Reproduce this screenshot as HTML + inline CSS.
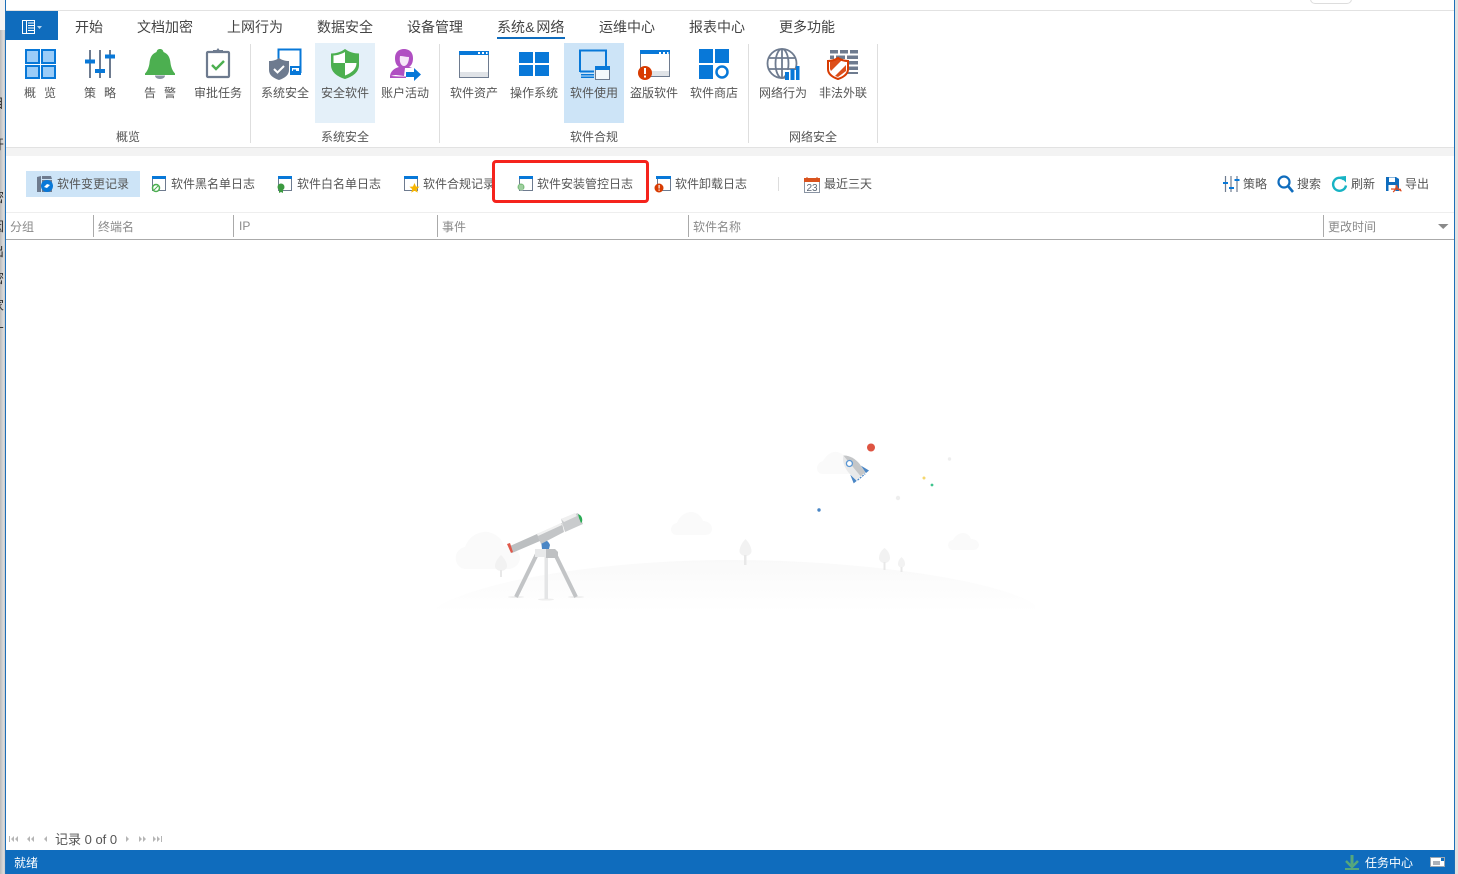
<!DOCTYPE html>
<html lang="zh"><head><meta charset="utf-8"><title>软件安装管控日志</title>
<style>
html,body{margin:0;padding:0;background:#fff}
body{width:1458px;height:874px;overflow:hidden;position:relative;font-family:"Liberation Sans","Noto Sans CJK SC",sans-serif;color:#555;font-size:12px}
.a{position:absolute}
.t{position:absolute;line-height:18px;height:18px;white-space:nowrap}
.tab{font-size:14px;top:18px;color:#444}
.r{top:84px;width:80px;text-align:center;color:#555}
.g{top:128px;width:100px;text-align:center;color:#555}
.b{top:175px;color:#555}
.h{top:218px;color:#8a8a8a}
.s{position:absolute;width:1px;background:#dedede;top:44px;height:99px}
.c{position:absolute;width:1px;background:#aaa;top:215px;height:22px}
svg{position:absolute;overflow:visible}
</style></head><body>

<!-- window edges -->
<div class="a" style="left:0;top:0;width:5px;height:874px;background:linear-gradient(90deg,#b9b9b9,#dcdcdc 70%,#c9c9c9)"></div>
<div class="a" style="left:0;top:0;width:5px;height:30px;background:#f4f4f4"></div>
<div class="a" style="left:5px;top:0;width:1px;height:874px;background:#1d6fb8"></div>
<div class="a" style="left:1454px;top:0;width:1px;height:874px;background:#1d6fb8"></div>
<div class="a" style="left:1455px;top:0;width:3px;height:874px;background:#e2e2e2"></div>
<div style="position:absolute;left:0;top:0;width:5px;height:874px;overflow:hidden;color:#333;font-size:13px">
<div class="t" style="left:-9px;top:95px">目</div>
<div class="t" style="left:-9px;top:136px">开</div>
<div class="t" style="left:-9px;top:189px">密</div>
<div class="t" style="left:-9px;top:218px">因</div>
<div class="t" style="left:-9px;top:243px">出</div>
<div class="t" style="left:-9px;top:270px">密</div>
<div class="t" style="left:-9px;top:297px">家</div>
<div class="t" style="left:-9px;top:324px">丁</div>
</div>

<!-- top -->
<div class="a" style="left:6px;top:10px;width:1448px;height:1px;background:#e2e2e2"></div>
<div class="a" style="left:1310px;top:-8px;width:40px;height:10px;border:1px solid #ddd;border-radius:5px"></div>

<!-- menu button -->
<div class="a" style="left:6px;top:11px;width:52px;height:29px;background:#0f6cbd"></div>
<svg style="left:0;top:0" width="60" height="40" fill="none">
<rect x="22.500" y="20.500" width="12" height="13" stroke="#fff"/><path d="M26.500 20v13M28 23h6M28 25.500h6M28 28h6M28 30.500h6" stroke="#fff"/>
<path d="M37 26h5l-2.500 3z" fill="#b9d6ee"/></svg>

<!-- tabs -->
<div class="t tab" style="left:75px">开始</div>
<div class="t tab" style="left:137px">文档加密</div>
<div class="t tab" style="left:227px">上网行为</div>
<div class="t tab" style="left:317px">数据安全</div>
<div class="t tab" style="left:407px">设备管理</div>
<div class="t tab" style="left:497px">系统<span style="letter-spacing:1.700px;margin-left:.3px">&amp;</span>网络</div>
<div class="a" style="left:497px;top:37px;width:68px;height:2px;background:#0f6cbd"></div>
<div class="t tab" style="left:599px">运维中心</div>
<div class="t tab" style="left:689px">报表中心</div>
<div class="t tab" style="left:779px">更多功能</div>

<!-- ribbon highlights -->
<div class="a" style="left:315px;top:43px;width:60px;height:80px;background:#e4f0f9"></div>
<div class="a" style="left:564px;top:43px;width:60px;height:80px;background:#cde4f7"></div>

<!-- ribbon separators -->
<div class="s" style="left:250px"></div><div class="s" style="left:439px"></div>
<div class="s" style="left:748px"></div><div class="s" style="left:877px"></div>

<!-- ribbon labels -->
<div class="t" style="left:24px;top:84px;letter-spacing:8px">概览</div>
<div class="t" style="left:84px;top:84px;letter-spacing:8px">策略</div>
<div class="t" style="left:144px;top:84px;letter-spacing:8px">告警</div>
<div class="t r" style="left:178px">审批任务</div>
<div class="t r" style="left:245px">系统安全</div>
<div class="t r" style="left:305px">安全软件</div>
<div class="t r" style="left:365px">账户活动</div>
<div class="t r" style="left:434px">软件资产</div>
<div class="t r" style="left:494px">操作系统</div>
<div class="t r" style="left:554px">软件使用</div>
<div class="t r" style="left:614px">盗版软件</div>
<div class="t r" style="left:674px">软件商店</div>
<div class="t r" style="left:743px">网络行为</div>
<div class="t r" style="left:803px">非法外联</div>
<div class="t g" style="left:78px">概览</div>
<div class="t g" style="left:295px">系统安全</div>
<div class="t g" style="left:544px">软件合规</div>
<div class="t g" style="left:763px">网络安全</div>

<!-- ribbon icons -->
<svg style="left:0;top:0" width="900" height="90" fill="none">
<!-- overview -->
<g fill="#9accf8" stroke="#0878d8" stroke-width="2"><rect x="26" y="50" width="13" height="13"/><rect x="42" y="50" width="13" height="13"/><rect x="26" y="66" width="13" height="12"/><rect x="42" y="66" width="13" height="12"/></g>
<!-- strategy -->
<path d="M90 50v28M100 50v28M110 50v28" stroke="#6e7b8f" stroke-width="2"/>
<path d="M85 59.500h10v4H85zM95 69h10v4H95zM105 54.500h10v4h-10z" fill="#0878d8"/>
<!-- bell -->
<path d="M160 49c2 0 3 1 3.500 3 5 2 6.500 6 7 11 .5 4 2 8 4.500 10.500v1.500h-30v-1.500c2.500-2.500 4-6.500 4.500-10.500.5-5 2-9 7-11 .5-2 1.500-3 3.500-3z" fill="#4caf50"/>
<path d="M155 75.500h10c0 2-2 3.500-5 3.500s-5-1.500-5-3.500z" fill="#8a94a3"/>
<!-- clipboard -->
<rect x="207" y="52" width="22" height="25" rx="1" stroke="#6e7b8f" stroke-width="2.200"/>
<path d="M213 52v-2h3.500l1.500-2 1.500 2h3.500v3h-10z" fill="#6e7b8f"/>
<path d="M212 65l4 4 8-8" stroke="#4caf50" stroke-width="2.400"/>
<!-- system security -->
<path d="M278.500 63V49.500h22V72h-9" stroke="#0878d8" stroke-width="2"/>
<path d="M291 67h9v7h-9z" fill="none" stroke="#0878d8" stroke-width="2"/><rect x="293" y="69.500" width="3" height="3" fill="#0878d8"/>
<path d="M279 58c3 2 6 3 10 3v9c0 5-4 8-10 10-6-2-10-5-10-10v-9c4 0 7-1 10-3z" fill="#6e7b8f"/>
<path d="M274 69l3.500 3.500 6.500-6.500" stroke="#fff" stroke-width="2"/>
<!-- safe software shield -->
<path d="M345 49c4 3 9 4.500 14 4.500V65c0 7-6 11.500-14 14-8-2.500-14-7-14-14V53.500c5 0 10-1.500 14-4.500z" fill="#4caf50"/>
<path d="M345 52v11h-11.500V55.500c4.500-.2 8-1.500 11.500-3.500zM345 63h11.500c0 6-5 10-11.500 12.500z" fill="#fff"/>
<!-- account -->
<path d="M396 75c-1 0-6 .5-6 2 0-6 5-9 9-10-3-2-4-5-4-9 0-6 4-9 9-9s9 3 9 9c0 4-1 7-4 9 1 0 2 .5 3 1h-7l-1 8z" fill="#b04fc2"/>
<path d="M400 56c3 0 6 1 9 1 0 5-2 9-5 9s-5-4-4-10z" fill="#f6e6f8"/>
<path d="M406 72h8v-4l7 6.500-7 6.500v-4h-8z" fill="#0878d8"/>
<path d="M390 75.500c3 1 10 1 16 1v1.500h-16z" fill="#b04fc2"/>
<!-- software assets -->
<rect x="459.500" y="51.500" width="29" height="26" stroke="#6e7b8f" fill="#fff"/><rect x="460" y="72" width="28" height="5" fill="#e0e3e7"/>
<rect x="459" y="51" width="30" height="4" fill="#0878d8"/><path d="M478 52h2v2h-2zM482 52h2v2h-2zM486 52h1.500v2H486z" fill="#fff"/>
<!-- windows -->
<path d="M519 52h14v11h-14zM535 52h14v11h-14zM519 65h14v11h-14zM535 65h14v11h-14z" fill="#0878d8"/>
<!-- software usage -->
<path d="M580 72V50.500h26V66" stroke="#0878d8" stroke-width="2"/>
<path d="M580 71.500h14" stroke="#0878d8" stroke-width="2"/>
<path d="M581 74h13v1.500h-13zM581 76.500h13v1.500h-13z" fill="#0878d8"/>
<rect x="595.500" y="67.500" width="14" height="12" fill="#f4f8fb" stroke="#6e7b8f"/><rect x="595" y="66" width="15" height="4" fill="#0878d8"/>
<!-- pirated -->
<rect x="640.500" y="51.500" width="29" height="25" stroke="#6e7b8f" fill="#fff"/><rect x="641" y="71" width="28" height="5" fill="#e0e3e7"/>
<rect x="640" y="50" width="30" height="4" fill="#0878d8"/><path d="M659 52h2v2h-2zM663 52h2v2h-2zM667 52h1.500v2H667z" fill="#fff"/>
<circle cx="645" cy="73" r="7" fill="#d83b01"/><path d="M644 68h2v6h-2zM644 75.500h2v2h-2z" fill="#fff"/>
<!-- store -->
<path d="M699 49h14v14h-14zM715 49h14v14h-14zM699 65h14v14h-14z" fill="#0878d8"/><circle cx="722" cy="72" r="5.500" stroke="#0878d8" stroke-width="2.500"/>
<!-- globe -->
<g stroke="#6e7b8f" stroke-width="1.800"><circle cx="782" cy="63.500" r="14.500"/><ellipse cx="782" cy="63.500" rx="6.500" ry="14.500"/><path d="M782 49v29M768 58h28M768 69h28"/></g>
<path d="M785 70h14v11h-14z" fill="#fff"/>
<path d="M785 80v-8h4v8zM790.500 80V69h4v11zM796 80V66h3.500v14z" fill="#0878d8"/>
<!-- firewall -->
<path d="M830 50h8v3.500h-8zM840 50h8v3.500h-8zM850 50h8v3.500h-8zM830 55.500h4v3.500h-4zM836 55.500h9v3.500h-9zM847 55.500h11v3.500h-11zM849 61h9v3.500h-9zM847 66.500h11v3.500h-11zM845 72h13v2h-13z" fill="#6e7b8f"/>
<path d="M838 58c3 2 6 3 10 3v8c0 5-4 8-10 10-6-2-10-5-10-10v-8c4 0 7-1 10-3z" fill="#fff" stroke="#d83b01" stroke-width="2"/>
<path d="M831 71l12-12-5-1-8 4v7zM846 65l-11 11 3 1 8-6z" fill="#d83b01" opacity=".9"/>
</svg>

<!-- ribbon bottom -->
<div class="a" style="left:6px;top:147px;width:1448px;height:1px;background:#e2e2e2"></div>
<div class="a" style="left:6px;top:148px;width:1448px;height:8px;background:#f3f3f3"></div>

<!-- toolbar -->
<div class="a" style="left:26px;top:171px;width:114px;height:26px;background:#cde4f7"></div>
<div class="t b" style="left:57px">软件变更记录</div>
<div class="t b" style="left:171px">软件黑名单日志</div>
<div class="t b" style="left:297px">软件白名单日志</div>
<div class="t b" style="left:423px;width:72px;overflow:hidden">软件合规记录</div>
<div class="t b" style="left:537px">软件安装管控日志</div>
<div class="t b" style="left:675px">软件卸载日志</div>
<div class="a" style="left:778px;top:177px;width:1px;height:14px;background:#ddd"></div>
<div class="t" style="left:824px;top:175px;color:#555">最近三天</div>
<div class="t b" style="left:1243px">策略</div>
<div class="t b" style="left:1297px">搜索</div>
<div class="t b" style="left:1351px">刷新</div>
<div class="t b" style="left:1405px">导出</div>

<div class="a" style="left:492px;top:160px;width:151px;height:37px;border:3px solid #f5231c;border-radius:4px"></div>

<svg style="left:0;top:150px" width="1458" height="60" fill="none">
<!-- change -->
<path d="M37 27l4-1v16h-4zM42 26h9l1 3h-10z" fill="#6e7b8f"/><path d="M42 30h10v12H42z" fill="#6e7b8f"/>
<circle cx="47" cy="36" r="6" fill="#0878d8"/><path d="M44 37l3-3 3 1-3 3z" fill="#fff"/>
<!-- window icons -->
<g>
<rect x="152.500" y="27.500" width="13" height="13" fill="#fff" stroke="#6e7b8f"/><rect x="152" y="26" width="14" height="3" fill="#0878d8"/>
<rect x="278.500" y="27.500" width="13" height="13" fill="#fff" stroke="#6e7b8f"/><rect x="278" y="26" width="14" height="3" fill="#0878d8"/>
<rect x="404.500" y="27.500" width="13" height="13" fill="#fff" stroke="#6e7b8f"/><rect x="404" y="26" width="14" height="3" fill="#0878d8"/>
<rect x="519.500" y="27.500" width="13" height="13" fill="#fff" stroke="#6e7b8f"/><rect x="519" y="26" width="14" height="3" fill="#0878d8"/>
<rect x="657.500" y="27.500" width="13" height="13" fill="#fff" stroke="#6e7b8f"/><rect x="656" y="26" width="15" height="3" fill="#0878d8"/>
</g>
<circle cx="156" cy="38" r="3.500" fill="#fff" stroke="#4caf50" stroke-width="1.500"/><path d="M154 40l4-4" stroke="#4caf50"/>
<circle cx="281" cy="37" r="3.500" fill="#3c9a40"/><path d="M279 40v3l2-1 2 1v-3" fill="#3c9a40"/>
<path d="M414.500 33l1.500 3.500 3.500.3-2.700 2.300.9 3.500-3.200-1.900-3.200 1.900.9-3.500-2.700-2.300 3.500-.3z" fill="#f7b500"/>
<circle cx="521" cy="37" r="3.500" fill="#7fbf7f"/><path d="M519 36h4M519 38h4M520 40h3" stroke="#fff" stroke-width=".6"/>
<circle cx="659" cy="38" r="4.500" fill="#d83b01"/><path d="M658.500 35h1.200v3.500h-1.200zM658.500 39.500h1.200v1.200h-1.200z" fill="#fff"/>
<!-- calendar -->
<rect x="804.500" y="29.500" width="15" height="13" fill="#fff" stroke="#8a94a3"/><rect x="804" y="28" width="16" height="4" fill="#d9531e"/>
<path d="M807 27v3M817 27v3" stroke="#d9531e"/>
<text x="812" y="41" font-size="10" text-anchor="middle" fill="#5b6675" font-family="Liberation Sans">23</text>
<!-- strategy -->
<path d="M1225.500 26v16M1231 26v16M1237 26v16" stroke="#6e7b8f" stroke-width="1.200"/>
<path d="M1223 32h5v2h-5zM1229 37h5v2h-5zM1234.500 29h5v2h-5z" fill="#0878d8"/>
<!-- search -->
<circle cx="1284" cy="32" r="5.500" stroke="#0f6cbd" stroke-width="2.200"/><path d="M1288 36l5 6" stroke="#0f6cbd" stroke-width="2.600"/>
<!-- refresh -->
<path d="M1344 29.500a6.500 6.500 0 1 0 2 6" stroke="#17b3c4" stroke-width="2.400"/><path d="M1340 26.500l6-.5v6.500z" fill="#17b3c4"/>
<!-- save -->
<path d="M1386 27h10l3 2v12h-13z" fill="#0f6cbd"/><rect x="1389" y="27.500" width="6" height="4.500" fill="#fff"/><rect x="1388.500" y="35" width="7" height="6" fill="#fff"/>
<path d="M1393 42c2-1 3-4 3.500-7M1396.500 35c.5 3 2 5 5 6M1391 39c3 0 7 0 10 .5" stroke="#e04a1f" stroke-width="1.200"/>
</svg>

<!-- table header -->
<div class="a" style="left:6px;top:212px;width:1448px;height:1px;background:#eee"></div>
<div class="a" style="left:6px;top:239px;width:1448px;height:1px;background:#aaa"></div>
<div class="c" style="left:93px"></div><div class="c" style="left:233px"></div><div class="c" style="left:437px"></div><div class="c" style="left:688px"></div><div class="c" style="left:1323px"></div>
<div class="t h" style="left:10px">分组</div>
<div class="t h" style="left:98px">终端名</div>
<div class="t h" style="left:239px;top:217px">IP</div>
<div class="t h" style="left:442px">事件</div>
<div class="t h" style="left:693px">软件名称</div>
<div class="t h" style="left:1328px">更改时间</div>
<svg style="left:1438px;top:224px" width="11" height="6"><path d="M0 0h10.500L5.200 5z" fill="#8a8a8a"/></svg>

<!-- empty state illustration -->
<svg style="left:0;top:0" width="1458" height="874" fill="none">
<defs><linearGradient id="hill" x1="0" y1="0" x2="0" y2="1"><stop offset="0" stop-color="#f9f9f9"/><stop offset="1" stop-color="#fff"/></linearGradient></defs>
<path d="M430 612c40-32 180-52 300-52 130 0 270 20 305 45v7z" fill="url(#hill)"/>
<g fill="#fafafa">
<path d="M466 569c-12 0-15-19-1-22 4-11 14-16 23-15 9 2 14 7 16 14 12 0 17 9 16 13-1 6-6 10-12 10z"/>
<path d="M677 535c-8 0-8-11 0-12 2-6 8-11 14-11 6 0 10 4 12 9 6 0 9 4 9 8 0 4-3 6-7 6z"/>
<path d="M953 550c-6 0-7-9 0-10 2-4 6-7 10-7 4 0 7 3 8 6 5 0 8 3 8 6s-3 5-6 5z"/>
<path d="M823 474c-8 0-8-11 0-13 3-6 9-10 14-9 5 1 9 4 10 9 8 0 12 6 12 13z"/>
</g>
<g fill="#f2f2f2">
<path d="M501 555c3 3 6 7 6 11 0 3-3 5-6 5s-6-2-6-5c0-4 3-8 6-11z"/>
<path d="M745.500 539c3 3 6 8 6 12 0 3-3 5-6 5s-6-2-6-5c0-4 3-9 6-12z"/>
<path d="M884.500 548c3 2 5.500 6 5.500 10 0 3-2.500 5-5.500 5s-5.500-2-5.500-5c0-4 2.500-8 5.500-10z"/>
<path d="M901.500 557c2 2 3.500 4 3.500 7 0 2-1.500 3.500-3.500 3.500s-3.500-1.500-3.500-3.500c0-3 1.500-5 3.500-7z"/>
<path d="M500 570h2v7h-2zM744 555h2.500v10H744zM883.500 562h2v8h-2zM900.500 567h2v5h-2z" fill="#e8e8e8"/>
</g>
<!-- telescope -->
<ellipse cx="516" cy="597" rx="8" ry="1" fill="#eee"/><ellipse cx="546" cy="599.500" rx="8" ry="1" fill="#eee"/><ellipse cx="576" cy="597" rx="8" ry="1" fill="#eee"/>
<path d="M537 554l-21 43M555 554l21 43" stroke="#c2c4c6" stroke-width="4"/>
<path d="M544.500 552h3.500v47h-3.500z" fill="#e4e5e6"/>
<path d="M535 549h20l3 3v5h-23z" fill="#e8e9ea"/><path d="M546 549h9l3 3v6h-12z" fill="#bfc1c3"/>
<path d="M541 540c3-1 7 0 9 5l-1 4h-7z" fill="#4a86c5"/>
<path d="M510 546l27-12 3 7-28 12z" fill="#bcbfc1"/>
<path d="M537 534l25-11 2 9-23 12z" fill="#c3c5c7"/><path d="M537 534l24-11 1 2-24 11z" fill="#f1f1f1"/>
<path d="M561 519l17-6 5 11-18 8z" fill="#c9cbcd"/><path d="M561 519l14-6 2 3-13 6z" fill="#efefef"/>
<path d="M507 544l3-1 3 9-2 1z" fill="#e0584a"/>
<path d="M578 514c3 1 5 4 4 8l-1 1-2-5z" fill="#2bab55"/>
<!-- rocket -->
<g transform="translate(853 467) rotate(-40)">
<path d="M0-15c5 4 7 10 7 17l-1 10h-12l-1-10c0-7 2-13 7-17z" fill="#e8e9ea"/>
<path d="M0-15c5 4 7 10 7 17l-1 10H0z" fill="#c4c6c8"/>
<circle cx="-.5" cy="-5" r="3" fill="#fff" stroke="#5b97d4" stroke-width="1.300"/>
<path d="M-7 4l-3 9h4zM7 4l3 9h-4z" fill="#4a86c5"/>
<path d="M-5 13h10" stroke="#4a86c5" stroke-width="1.200" stroke-dasharray="2 1"/>
</g>
<circle cx="871" cy="447.500" r="4" fill="#de5442"/>
<circle cx="949.500" cy="459" r="1.700" fill="#eee"/><circle cx="924" cy="478" r="1.500" fill="#f5d76e"/>
<circle cx="932" cy="485" r="1.400" fill="#3fc48e"/><circle cx="898" cy="498" r="2.200" fill="#eee"/>
<circle cx="819" cy="510" r="1.700" fill="#4a86c5"/>
</svg>

<!-- pager -->
<svg style="left:0;top:834px" width="170" height="10" fill="#b5b5b5">
<path d="M9 2h1v6H9zM14 2v6l-3-3zM18 2v6l-3-3z"/>
<path d="M30 2v6l-3-3zM34 2v6l-3-3z"/>
<path d="M47 2v6l-3-3z"/>
<path d="M126 2v6l3-3z"/>
<path d="M139 2v6l3-3zM143 2v6l3-3z"/>
<path d="M153 2v6l3-3zM157 2v6l3-3zM161 2h1v6h-1z"/>
</svg>
<div class="t" style="left:55px;top:831px;font-size:13px;color:#555">记录 0 of 0</div>

<!-- status bar -->
<div class="a" style="left:6px;top:850px;width:1448px;height:24px;background:#0f6cbd"></div>
<div class="t" style="left:14px;top:854px;color:#fff">就绪</div>
<div class="t" style="left:1365px;top:854px;color:#fff">任务中心</div>
<svg style="left:1344px;top:854px" width="16" height="17" fill="none">
<path d="M8 1v10" stroke="#56a77c" stroke-width="3"/><path d="M2 7l6 6 6-6" stroke="#56a77c" stroke-width="2.500"/><path d="M1 15h14" stroke="#56a77c" stroke-width="2"/></svg>
<svg style="left:1430px;top:857px" width="15" height="11" fill="none">
<rect x=".5" y=".5" width="14" height="9" fill="#fff" stroke="#9aa6b2"/><path d="M3 5h7M3 7h7" stroke="#5b6675"/><rect x="11" y="1" width="3" height="3" fill="#0f6cbd"/></svg>

</body></html>
